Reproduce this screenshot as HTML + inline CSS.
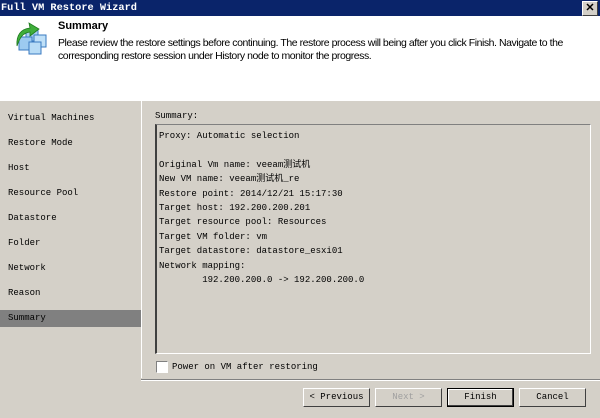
<!DOCTYPE html>
<html><head><style>
body{margin:0;width:600px;height:418px;background:#d4d0c8;position:relative;overflow:hidden;font-family:"Liberation Mono","Noto Sans CJK SC",monospace;font-size:9px;color:#000}
.abs{position:absolute}
.title{left:0;top:0;width:600px;height:16px;background:#0a246a;color:#fff;font-weight:bold;font-family:"Liberation Mono",monospace;font-size:10.3px;line-height:16px;text-indent:1px}
.close{right:2px;top:1px;width:14px;height:13px;background:#d4d0c8;border:1px solid;border-color:#fff #404040 #404040 #fff;color:#000;font:bold 11px/13px "Liberation Sans",sans-serif;text-align:center}
.hdr{left:0;top:16px;width:600px;height:84px;background:#fff;border-bottom:1px solid #fff}
.h1{left:58px;top:20px;font:bold 11px "Liberation Sans",sans-serif}
.h2{left:58px;top:37px;width:515px;font:10.5px/13px "Liberation Sans",sans-serif;letter-spacing:-0.45px}
.nav{left:0;top:101px;width:141px;height:277px;background:#d4d0c8;border-right:1px solid #fff}
.item{position:absolute;left:0;width:141px;height:17px;line-height:17px;text-indent:8px}
.sel{background:#808080;color:#000}
.box{left:155px;top:124px;width:433px;height:228px;border-left:2px solid #404040;border-top:1px solid #808080;border-right:1px solid #fff;border-bottom:1px solid #fff}
.lines{left:159px;top:129px;line-height:14.4px;white-space:pre}
.btn{top:388px;height:19px;width:67px;border:1px solid;border-color:#fff #404040 #404040 #fff;text-align:center;line-height:17px;box-sizing:border-box}
</style></head><body>
<div class="abs title">Full VM Restore Wizard</div>
<div class="abs close">✕</div>
<div class="abs hdr"></div>
<svg class="abs" style="left:11px;top:22px" width="36" height="34" viewBox="0 0 36 34">
<rect x="15" y="7" width="12" height="12" fill="#a8d0f0" stroke="#3a7ac0"/>
<rect x="23" y="13" width="12" height="12" fill="#bfe0f8" stroke="#3a7ac0"/>
<rect x="8" y="15" width="13" height="13" fill="#9ccaf0" stroke="#3a7ac0"/>
<rect x="18" y="20" width="12" height="12" fill="#b8dcf6" stroke="#3a7ac0"/>
<path d="M6 24 C5 13 10 7 19 6 L18 1 L28 7 L19 14 L19 10 C12 11 9 15 6 24Z" fill="#3fae3a" stroke="#1f7a1f" stroke-width="0.8"/>
</svg>
<div class="abs h1">Summary</div>
<div class="abs h2">Please review the restore settings before continuing. The restore process will being after you click Finish. Navigate to the corresponding restore session under History node to monitor the progress.</div>
<div class="abs nav">
<div class="item" style="top:9px">Virtual Machines</div>
<div class="item" style="top:34px">Restore Mode</div>
<div class="item" style="top:59px">Host</div>
<div class="item" style="top:84px">Resource Pool</div>
<div class="item" style="top:109px">Datastore</div>
<div class="item" style="top:134px">Folder</div>
<div class="item" style="top:159px">Network</div>
<div class="item" style="top:184px">Reason</div>
<div class="item sel" style="top:209px">Summary</div>
</div>
<div class="abs" style="left:155px;top:111px">Summary:</div>
<div class="abs box"></div>
<div class="abs lines">Proxy: Automatic selection

Original Vm name: veeam测试机
New VM name: veeam测试机_re
Restore point: 2014/12/21 15:17:30
Target host: 192.200.200.201
Target resource pool: Resources
Target VM folder: vm
Target datastore: datastore_esxi01
Network mapping:
        192.200.200.0 -> 192.200.200.0</div>
<div class="abs" style="left:156px;top:361px;width:10px;height:10px;background:#fff;border:1px solid;border-color:#808080 #fff #fff #808080"></div>
<div class="abs" style="left:172px;top:362px">Power on VM after restoring</div>
<div class="abs" style="left:141px;top:379px;width:459px;height:1px;background:#808080"></div>
<div class="abs" style="left:141px;top:380px;width:459px;height:1px;background:#fff"></div>
<div class="abs btn" style="left:303px">&lt; Previous</div>
<div class="abs btn" style="left:375px;color:#a0a0a0">Next &gt;</div>
<div class="abs btn" style="left:447px;border:1px solid #000;box-shadow:inset -1px -1px #404040,inset 1px 1px #fff">Finish</div>
<div class="abs btn" style="left:519px">Cancel</div>
</body></html>
